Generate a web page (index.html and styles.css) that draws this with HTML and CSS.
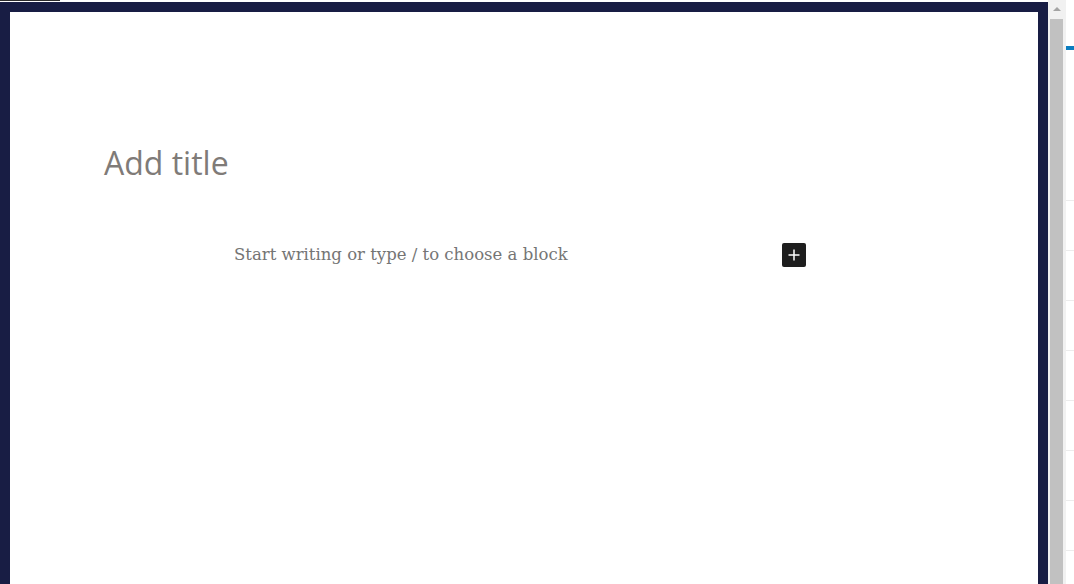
FILE: index.html
```html
<!DOCTYPE html>
<html lang="en">
<head>
<meta charset="utf-8">
<title>Editor</title>
<link rel="stylesheet" href="styles.css">
</head>
<body>
<div class="page">
  <div class="editor-wrap">
    <div class="topbar"><span class="topline"></span></div>
    <div class="frame">
      <div class="title-row">
        <div class="title">Add title</div>
      </div>
      <div class="block-row">
        <div class="placeholder">Start writing or type / to choose a block</div>
        <button class="inserter" aria-label="Add block">
          <svg width="24" height="24" viewBox="0 0 24 24"><path d="M11.25 6.5h1.5v4.75h4.75v1.5h-4.75v4.75h-1.5v-4.75H6.5v-1.5h4.75z" fill="#fff"/></svg>
        </button>
      </div>
    </div>
  </div>
  <div class="scrollbar">
    <div class="scroll-arrow"><span class="arrow-up"></span></div>
    <div class="scroll-thumb"></div>
  </div>
  <div class="side-strip">
    <span class="side-mark"></span>
    <div class="side-lines"></div>
  </div>
</div>
</body>
</html>
```

FILE: styles.css
```css
html, body {
  margin: 0;
  padding: 0;
  height: 100%;
  background: #ffffff;
  overflow: hidden;
}

.page {
  display: flex;
  height: 584px;
}

.editor-wrap {
  width: 1048px;
  display: flex;
  flex-direction: column;
}

.topbar {
  height: 2px;
  display: flex;
  align-items: flex-start;
}

.topline {
  width: 60px;
  height: 1px;
  background: #2c2c2c;
}

.frame {
  flex: 1;
  background: #ffffff;
  border: 10px solid #181d44;
  border-bottom: none;
  display: flex;
  flex-direction: column;
  align-items: center;
}

.title-row {
  width: 840px;
  margin-top: 131px;
}

.title {
  font-family: "Open Sans", "Noto Sans", sans-serif;
  font-size: 32px;
  line-height: 40px;
  color: #7f7b78;
}

.block-row {
  width: 580px;
  margin-top: 60px;
  display: flex;
  align-items: center;
  justify-content: space-between;
  height: 24px;
}

.placeholder {
  font-family: "DejaVu Serif", "Liberation Serif", serif;
  font-size: 16.5px;
  line-height: 24px;
  color: #757575;
}

.inserter {
  width: 24px;
  height: 24px;
  margin-right: 8px;
  padding: 0;
  border: none;
  border-radius: 2px;
  background: #1e1e1e;
  display: flex;
  align-items: center;
  justify-content: center;
}

.scrollbar {
  width: 18px;
  background: #f1f1f1;
  display: flex;
  flex-direction: column;
  align-items: flex-start;
}

.scroll-arrow {
  height: 19px;
  width: 18px;
  display: flex;
  justify-content: center;
  padding-top: 7px;
  box-sizing: border-box;
}

.arrow-up {
  width: 0;
  height: 0;
  border-left: 4px solid transparent;
  border-right: 4px solid transparent;
  border-bottom: 4px solid #a3a3a3;
  margin-left: -1px;
}

.scroll-thumb {
  flex: 1;
  width: 13px;
  margin-left: 2px;
  background: #c1c1c1;
}

.side-strip {
  width: 8px;
  background: #ffffff;
  display: flex;
  flex-direction: column;
}

.side-mark {
  display: block;
  width: 8px;
  height: 4px;
  margin-top: 46px;
  background: #0a7cbf;
}

.side-lines {
  flex: 1;
  margin-top: 101px;
  background-image: repeating-linear-gradient(to bottom, transparent 0, transparent 49px, #ececec 49px, #ececec 50px);
}
```
